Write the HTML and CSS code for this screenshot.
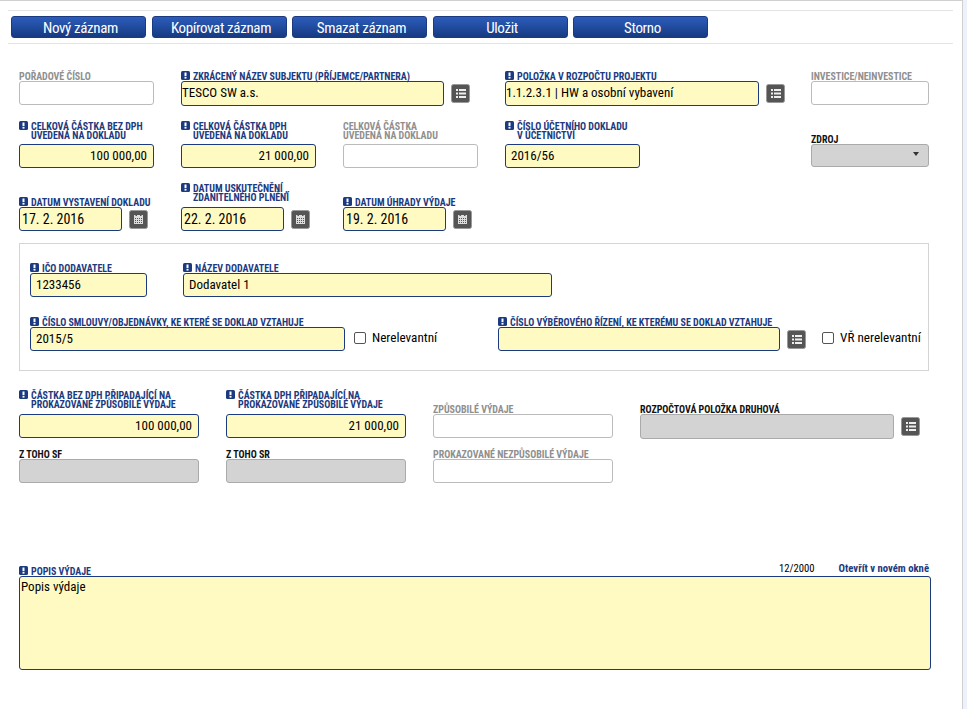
FILE: index.html
```html
<!DOCTYPE html>
<html lang="cs">
<head>
	<meta charset="UTF-8">
	<title>Doklad</title>
	<link rel="stylesheet" href="styles.css">
</head>
<body>
	<svg class="defs" width="0" height="0">
		<symbol id="req" viewBox="0 0 9 9">
			<rect width="9" height="9" rx="1.5" fill="#1c3a80"/>
			<rect x="3.5" y="1.5" width="2" height="3.7" fill="#fff"/>
			<rect x="3.5" y="6" width="2" height="1.6" fill="#fff"/>
		</symbol>
		<symbol id="list" viewBox="0 0 19 19">
			<rect x=".5" y=".5" width="18" height="18" rx="2" fill="#555" stroke="#999"/>
			<path d="M5 5h2v2H5zM8 5h7v2H8zM5 8.5h2v2H5zM8 8.5h7v2H8zM5 12h2v2H5zM8 12h7v2H8z" fill="#eee"/>
		</symbol>
		<symbol id="cal" viewBox="0 0 19 19">
			<rect x=".5" y=".5" width="18" height="18" rx="2" fill="#555" stroke="#999"/>
			<path d="M5 5h1.5v1H8V5h3v1h1.5V5H14v9H5zM6 8v1h1V8zM8 8v1h1V8zM10 8v1h1V8zM12 8v1h1V8zM6 10v1h1v-1zM8 10v1h1v-1zM10 10v1h1v-1zM12 10v1h1v-1zM6 12v1h1v-1zM8 12v1h1v-1zM10 12v1h1v-1zM12 12v1h1v-1z" fill="#ddd" fill-rule="evenodd"/>
		</symbol>
	</svg>

	<div class="page">
		<div class="toolbar">
			<button class="btn">Nový záznam</button>
			<button class="btn">Kopírovat záznam</button>
			<button class="btn">Smazat záznam</button>
			<button class="btn">Uložit</button>
			<button class="btn">Storno</button>
		</div>

		<div class="row row-a">
			<div class="field w135">
				<label class="lbl off">Pořadové číslo</label>
				<div class="input"></div>
			</div>
			<div class="field">
				<label class="lbl"><svg class="req"><use href="#req"/></svg>Zkrácený název subjektu (příjemce/partnera)</label>
				<div class="line">
					<div class="input must w263 tall">TESCO SW a.s.</div>
					<svg class="ico"><use href="#list"/></svg>
				</div>
			</div>
			<div class="field">
				<label class="lbl"><svg class="req"><use href="#req"/></svg>Položka v rozpočtu projektu</label>
				<div class="line">
					<div class="input must w254 tall">1.1.2.3.1 | HW a osobní vybavení</div>
					<svg class="ico"><use href="#list"/></svg>
				</div>
			</div>
			<div class="field">
				<label class="lbl off">Investice/neinvestice</label>
				<div class="input"></div>
			</div>
		</div>

		<div class="row row-b">
			<div class="field w135">
				<label class="lbl two"><svg class="req"><use href="#req"/></svg>Celková částka bez DPH<br>uvedená na dokladu</label>
				<div class="input must num">100 000,00</div>
			</div>
			<div class="field w135">
				<label class="lbl two"><svg class="req"><use href="#req"/></svg>Celková částka DPH<br>uvedená na dokladu</label>
				<div class="input must num">21 000,00</div>
			</div>
			<div class="field w135">
				<label class="lbl off two">Celková částka<br>uvedená na dokladu</label>
				<div class="input"></div>
			</div>
			<div class="field w135">
				<label class="lbl two"><svg class="req"><use href="#req"/></svg>Číslo účetního dokladu<br>v účetnictví</label>
				<div class="input must pad">2016/56</div>
			</div>
			<div class="field">
				<label class="lbl dark">Zdroj</label>
				<div class="input gray select"><span class="caret"></span></div>
			</div>
		</div>

		<div class="row row-c">
			<div class="field">
				<label class="lbl"><svg class="req"><use href="#req"/></svg>Datum vystavení dokladu</label>
				<div class="line">
					<div class="input must w103 date">17. 2. 2016</div>
					<svg class="ico"><use href="#cal"/></svg>
				</div>
			</div>
			<div class="field">
				<label class="lbl two"><svg class="req"><use href="#req"/></svg>Datum uskutečnění ,<br>zdanitelného plnění</label>
				<div class="line">
					<div class="input must w103 date">22. 2. 2016</div>
					<svg class="ico"><use href="#cal"/></svg>
				</div>
			</div>
			<div class="field">
				<label class="lbl"><svg class="req"><use href="#req"/></svg>Datum úhrady výdaje</label>
				<div class="line">
					<div class="input must w103 date">19. 2. 2016</div>
					<svg class="ico"><use href="#cal"/></svg>
				</div>
			</div>
		</div>

		<div class="group">
			<div class="row row-d">
				<div class="field w117">
					<label class="lbl"><svg class="req"><use href="#req"/></svg>IČO dodavatele</label>
					<div class="input must pad">1233456</div>
				</div>
				<div class="field w369">
					<label class="lbl"><svg class="req"><use href="#req"/></svg>Název dodavatele</label>
					<div class="input must pad">Dodavatel 1</div>
				</div>
			</div>
			<div class="row row-e">
				<div class="field">
					<label class="lbl"><svg class="req"><use href="#req"/></svg>Číslo smlouvy/objednávky, ke které se doklad vztahuje</label>
					<div class="line">
						<div class="input must w315 pad">2015/5</div>
						<label class="check first"><span class="box"></span>Nerelevantní</label>
					</div>
				</div>
				<div class="field">
					<label class="lbl"><svg class="req"><use href="#req"/></svg>Číslo výběrového řízení, ke kterému se doklad vztahuje</label>
					<div class="line">
						<div class="input must w282"></div>
						<svg class="ico"><use href="#list"/></svg>
						<label class="check second"><span class="box"></span>VŘ nerelevantní</label>
					</div>
				</div>
			</div>
		</div>

		<div class="row row-f">
			<div class="field w180">
				<label class="lbl two"><svg class="req"><use href="#req"/></svg>Částka bez DPH připadající na<br>prokazované způsobilé výdaje</label>
				<div class="input must num">100 000,00</div>
			</div>
			<div class="field w180">
				<label class="lbl two"><svg class="req"><use href="#req"/></svg>Částka DPH připadající na<br>prokazované způsobilé výdaje</label>
				<div class="input must num">21 000,00</div>
			</div>
			<div class="field w180">
				<label class="lbl off">Způsobilé výdaje</label>
				<div class="input"></div>
			</div>
			<div class="field">
				<label class="lbl dark">Rozpočtová položka druhová</label>
				<div class="line">
					<div class="input gray w254 tall"></div>
					<svg class="ico"><use href="#list"/></svg>
				</div>
			</div>
		</div>

		<div class="row row-g">
			<div class="field w180">
				<label class="lbl dark">Z toho SF</label>
				<div class="input gray"></div>
			</div>
			<div class="field w180">
				<label class="lbl dark">Z toho SR</label>
				<div class="input gray"></div>
			</div>
			<div class="field w180">
				<label class="lbl off">Prokazované nezpůsobilé výdaje</label>
				<div class="input"></div>
			</div>
		</div>

		<div class="popis">
			<div class="popis-head">
				<label class="lbl"><svg class="req"><use href="#req"/></svg>Popis výdaje</label>
				<span class="count">12/2000</span>
				<a class="open">Otevřít v novém okně</a>
			</div>
			<div class="area">Popis výdaje</div>
		</div>
	</div>
</body>
</html>
```

FILE: styles.css
```css
/*reset*/
html,body,div,label,button,span{
	padding: 0;
	margin: 0;
	box-sizing: border-box;
}
html,body{
	height: 709px;
	overflow: hidden;
}
body{
	background: #edf1fb;
	font: 13px/20px Roboto, Arial, sans-serif;
	font-stretch: condensed;
	color: #000;
}
.defs{position: absolute;}

/*page*/
.page{
	width: 963px;
	height: 709px;
	background: #fff;
	border-top: 1px solid #d0d0d0;
	border-right: 1px solid #d0d0d0;
	padding-top: 9px;
}
.toolbar{
	display: flex;
	gap: 5.5px;
	width: 945px;
	height: 34px;
	margin-left: 8px;
	padding: 5px 0 0 3px;
	border-top: 1px solid #e4e4e4;
	border-bottom: 1px solid #e4e4e4;
}
.btn{
	width: 135px;
	height: 22px;
	padding: 1px 0 0 4px;
	border: 1px solid #1c3a80;
	border-radius: 3px;
	background: linear-gradient(#2c5dbb, #163a82);
	color: #fff;
	font: 15px/20px Roboto, Arial, sans-serif;
	font-stretch: condensed;
	letter-spacing: -.35px;
}

/*rows*/
.row{
	display: grid;
	align-items: end;
}
.row-a{
	grid-template-columns: 162px 324px 306px 118px;
	margin: 28px 0 0 19px;
}
.row-b{
	grid-template-columns: 162px 162px 162px 306px 118px;
	margin: 17px 0 0 19px;
}
.row-c{
	grid-template-columns: 162px 162px 162px;
	margin: 16px 0 0 19px;
}
.row-d{
	grid-template-columns: 153px 369px;
}
.row-e{
	grid-template-columns: 468px 431px;
	margin-top: 21px;
}
.row-f{
	grid-template-columns: 207px 207px 207px 290px;
	margin: 20px 0 0 19px;
}
.row-g{
	grid-template-columns: 207px 207px 207px;
	margin: 12px 0 0 19px;
}
.field{
	display: flex;
	flex-direction: column;
}
.line{
	display: flex;
	align-items: center;
}
.w103{width: 103px;}
.w117{width: 117px;}
.w135{width: 135px;}
.w180{width: 180px;}
.w254{width: 254px;}
.w263{width: 263px;}
.w282{width: 282px;}
.w315{width: 315px;}
.w369{width: 369px;}

/*labels*/
.lbl{
	display: block;
	position: relative;
	padding-left: 12px;
	font-size: 10px;
	line-height: 9px;
	font-weight: 700;
	letter-spacing: -.03px;
	text-transform: uppercase;
	color: #1c3a80;
}
.lbl.two{margin-bottom: 4px;}
.row-c .lbl.two,.row-f .lbl.two{margin-bottom: 5px;}
.lbl.off{
	padding-left: 0;
	color: #8f8f8f;
}
.lbl.dark{
	padding-left: 0;
	color: #111;
}
.req{
	position: absolute;
	left: 0;
	top: -1px;
	width: 9px;
	height: 9px;
}

/*inputs*/
.input{
	height: 24px;
	border: 1px solid #bbb;
	border-radius: 3px;
	background: #fff;
	line-height: 22px;
	white-space: nowrap;
}
.tall{
	height: 25px;
	margin-bottom: -1px;
}
.must{
	border-color: #1c3a80;
	background: #fff9c2;
}
.gray{
	border-color: #aaa;
	background: #d3d3d3;
}
.num{
	text-align: right;
	padding-right: 6px;
}
.pad{padding-left: 5px;}
.date{
	padding-left: 2px;
	font-size: 14px;
}
.select{
	position: relative;
	height: 23px;
	margin-bottom: 1px;
}
.caret{
	position: absolute;
	top: 7px;
	right: 9px;
	border-left: 3px solid transparent;
	border-right: 3px solid transparent;
	border-top: 4px solid #333;
}
.ico{
	width: 19px;
	height: 19px;
	margin-left: 7px;
	flex: none;
}

/*group box*/
.group{
	width: 910px;
	height: 128px;
	margin: 12px 0 0 19px;
	padding: 20px 0 0 10px;
	border: 1px solid #d5d5d5;
}
.check{
	display: flex;
	align-items: center;
	margin-bottom: 3px;
	font-size: 13.2px;
}
.check.first{margin-left: 9px;}
.check.second{margin-left: 16px;}
.box{
	width: 12px;
	height: 12px;
	margin-right: 6px;
	border: 1px solid #555;
	border-radius: 2px;
	background: #fff;
}

/*popis*/
.popis{
	width: 912px;
	margin: 79px 0 0 19px;
}
.popis-head{
	display: flex;
	align-items: flex-end;
	height: 14px;
	padding-right: 2px;
}
.popis-head .lbl{
	margin: 0 auto 0 0;
}
.count{
	font-size: 10.7px;
	line-height: 14px;
	margin-right: 24px;
}
.open{
	font-size: 10.7px;
	line-height: 14px;
	font-weight: 700;
	color: #1c3a80;
}
.area{
	height: 94px;
	padding: 0 1px;
	border: 1px solid #1c3a80;
	border-radius: 3px;
	background: #fff9c2;
}
```
